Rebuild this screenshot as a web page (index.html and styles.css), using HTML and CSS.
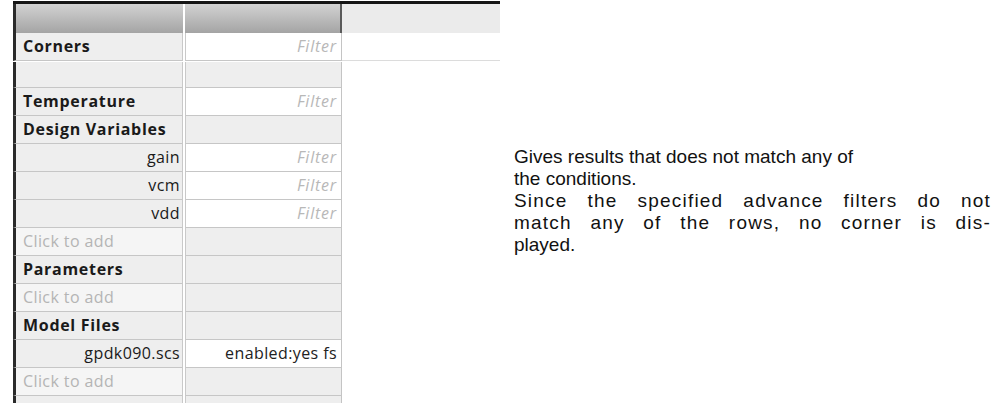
FILE: index.html
```html
<!DOCTYPE html>
<html>
<head>
<meta charset="utf-8">
<link rel="stylesheet" href="styles.css">
</head>
<body>
<div class="page">
  <div class="panel">
    <div class="section">
      <div class="row head">
        <div class="c1"></div>
        <div class="c2"></div>
        <div class="c3"></div>
      </div>
      <div class="row">
        <div class="c1 bold">Corners</div>
        <div class="c2 white filter">Filter</div>
        <div class="c3 white"></div>
      </div>
    </div>
    <div class="sep"></div>
    <div class="section second">
      <div class="row short">
        <div class="c1"></div>
        <div class="c2"></div>
        <div class="c3 blank"></div>
      </div>
      <div class="row">
        <div class="c1 bold">Temperature</div>
        <div class="c2 white filter">Filter</div>
        <div class="c3 blank"></div>
      </div>
      <div class="row">
        <div class="c1 bold">Design Variables</div>
        <div class="c2"></div>
        <div class="c3 blank"></div>
      </div>
      <div class="row">
        <div class="c1 right">gain</div>
        <div class="c2 white filter">Filter</div>
        <div class="c3 blank"></div>
      </div>
      <div class="row">
        <div class="c1 right">vcm</div>
        <div class="c2 white filter">Filter</div>
        <div class="c3 blank"></div>
      </div>
      <div class="row">
        <div class="c1 right">vdd</div>
        <div class="c2 white filter">Filter</div>
        <div class="c3 blank"></div>
      </div>
      <div class="row">
        <div class="c1 add">Click to add</div>
        <div class="c2"></div>
        <div class="c3 blank"></div>
      </div>
      <div class="row">
        <div class="c1 bold">Parameters</div>
        <div class="c2"></div>
        <div class="c3 blank"></div>
      </div>
      <div class="row">
        <div class="c1 add">Click to add</div>
        <div class="c2"></div>
        <div class="c3 blank"></div>
      </div>
      <div class="row">
        <div class="c1 bold">Model Files</div>
        <div class="c2"></div>
        <div class="c3 blank"></div>
      </div>
      <div class="row">
        <div class="c1 right">gpdk090.scs</div>
        <div class="c2 white value">enabled:yes fs</div>
        <div class="c3 blank"></div>
      </div>
      <div class="row">
        <div class="c1 add">Click to add</div>
        <div class="c2"></div>
        <div class="c3 blank"></div>
      </div>
      <div class="row last">
        <div class="c1"></div>
        <div class="c2"></div>
        <div class="c3 blank"></div>
      </div>
    </div>
  </div>
  <div class="desc">
    <span class="line">Gives results that does not match any of</span>
    <span class="line">the conditions.</span>
    <span class="line full">Since the specified advance filters do not</span>
    <span class="line full">match any of the rows, no corner is dis-</span>
    <span class="line">played.</span>
  </div>
</div>
</body>
</html>
```

FILE: styles.css
```css
html, body {
  margin: 0;
  padding: 0;
  background: #ffffff;
}
body {
  width: 1005px;
  height: 403px;
  overflow: hidden;
}
.page {
  display: flex;
  align-items: flex-start;
  height: 403px;
  overflow: hidden;
}
.panel {
  width: 487px;
  height: 399px;
  overflow: hidden;
  margin: 1px 0 0 13px;
  border-top: 3px solid #151515;
  display: flex;
  flex-direction: column;
  font-family: "Open Sans", "Noto Sans", sans-serif;
  font-size: 16px;
  color: #1a1a1a;
}
.section {
  display: flex;
  flex-direction: column;
  flex-shrink: 0;
}
.sep {
  height: 1px;
  flex-shrink: 0;
  background: #ffffff;
}
.row {
  display: flex;
  height: 28px;
  flex-shrink: 0;
}
.row.short {
  height: 26px;
}
.row.head {
  height: 29px;
}
.c1 {
  width: 170px;
  border-left: 3px solid #2a2a2a;
  border-right: 1px solid #c9c9c9;
  border-bottom: 1px solid #c6c6c6;
  background: #eeeeee;
  display: flex;
  align-items: center;
  padding: 0 2px 2px 7px;
  box-sizing: border-box;
  letter-spacing: 0.4px;
  white-space: nowrap;
}
.c2 {
  margin-left: 2px;
  width: 157px;
  box-sizing: border-box;
  border-left: 1px solid #c9c9c9;
  border-right: 1px solid #c4c4c4;
  border-bottom: 1px solid #c6c6c6;
  background: #eeeeee;
  display: flex;
  align-items: center;
  justify-content: flex-end;
  padding: 0 4px 2px 0;
  letter-spacing: 0.4px;
  white-space: nowrap;
}
.c3 {
  flex: 1;
}
.head .c1 {
  background: linear-gradient(#d2d2d2, #a4a4a4);
  border-bottom: none;
  border-right: none;
}
.head .c2 {
  background: linear-gradient(#d2d2d2, #a4a4a4);
  border-left: none;
  border-bottom: none;
  border-right: 2px solid #5a5a5a;
}
.head .c3 {
  background: #ebebeb;
}
.white {
  background: #ffffff;
}
.c3.white {
  border-bottom: 1px solid #dcdcdc;
}
.bold {
  font-weight: 700;
  letter-spacing: 0.7px;
}
.right {
  justify-content: flex-end;
}
.add {
  color: #b4b4b4;
  background: #f5f5f5;
}
.filter {
  font-style: italic;
  color: #b8b8b8;
  letter-spacing: 0.8px;
}
.value {
  color: #222222;
}
.desc {
  width: 477px;
  margin: 146px 0 0 14px;
  font-family: "Liberation Sans", Arial, sans-serif;
  font-size: 19px;
  line-height: 22px;
  color: #111111;
  display: flex;
  flex-direction: column;
}
.line {
  display: block;
  white-space: nowrap;
}
.full {
  text-align: justify;
  text-align-last: justify;
  letter-spacing: 1.2px;
}
```
